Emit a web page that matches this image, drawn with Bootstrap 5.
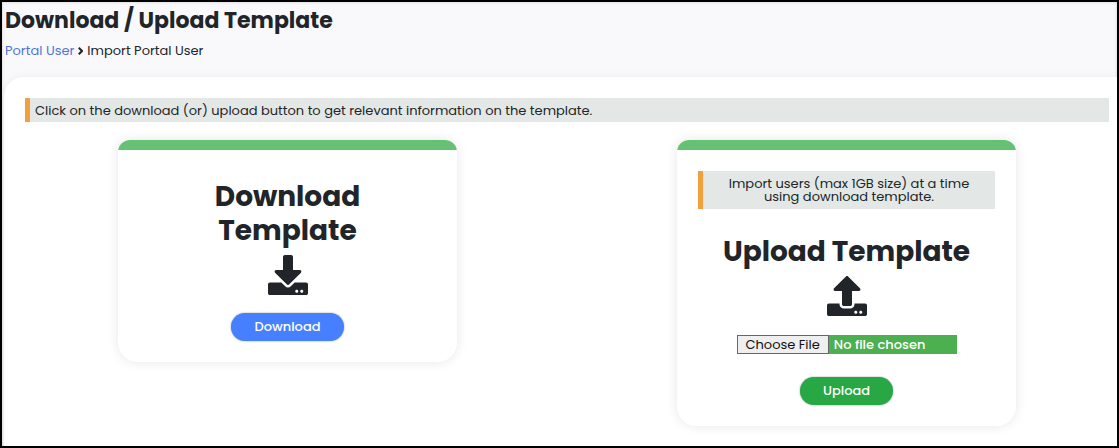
<!DOCTYPE html>
<html lang="en">
<head>
<meta charset="utf-8">
<meta name="viewport" content="width=device-width, initial-scale=1">
<title>Download / Upload Template</title>
<link href="https://cdn.jsdelivr.net/npm/bootstrap@5.3.0/dist/css/bootstrap.min.css" rel="stylesheet">
<style>
body{font-family:Poppins,Inter,sans-serif;font-size:13px;line-height:20px;color:#212529;background:#f9f9fb}
.app-frame{border:2px solid #000;box-shadow:inset 0 0 3px #ccc}
.page-title{font-size:22px;line-height:26px;font-weight:700;padding:6px 3px 0}
.crumbs{padding:0 3px;margin-top:7px}
.crumbs a{color:#4f74d9}
.panel{background:#fff;border-radius:20px 0 0 0;box-shadow:0 0 10px rgba(0,0,0,.06);margin:16px 0 0 2px;padding:21px 8px 16px 21px}
.note{background:#e3e8e6;border-left:5px solid #f2a03d;padding:3px 5px 1px}
.tiles{padding:0 93px;margin-top:18px}
.tile{width:339px;border:0;border-radius:12px 12px 20px 20px;background:linear-gradient(#66c272 10px,#fff 10px);box-shadow:0 0 12px rgba(0,0,0,.1);padding:31px 21px 21px}
.tile-narrow{padding-top:40px}
.tile .note{line-height:13px;padding:6px 20px;width:297px}
.tile h2{font-size:28px;line-height:34px;font-weight:700;margin:0}
.tile-narrow h2{width:180px}
.tile .note + h2{margin-top:26px}
.tile svg{width:40px;height:40px;margin-top:7px}
.pill{border-radius:20px;font-size:13px;line-height:20px;font-weight:500;padding:4px 23px;color:#fff;box-shadow:0 0 2px rgba(0,0,0,.4)}
.pill-blue{background:#467fff;margin-top:18px}
.pill-green{background:#28a745;margin-top:23px}
.picker{width:220px;height:19px;margin-top:19px;background:#4caf50;color:#fff;font-size:13px;font-weight:500;line-height:17px}
.picker::file-selector-button{height:19px;margin:0 5px 0 0;padding:0 8px;border:1px solid #666;border-radius:0;background:#efefef;color:#111;font:400 13px/17px Poppins,Inter,sans-serif}
</style>
</head>
<body>
<div class="app-frame min-vh-100 d-flex flex-column">
  <header>
    <h1 class="page-title m-0">Download / Upload Template</h1>
    <nav class="crumbs d-flex align-items-center" aria-label="Breadcrumb">
      <a class="text-decoration-none" href="#">Portal User</a>
      <svg class="mx-1" width="5" height="8" viewBox="0 0 5 8" fill="none" stroke="#212529" stroke-width="2" aria-hidden="true"><path d="M.8.8 4 4 .8 7.200"/></svg>
      <span>Import Portal User</span>
    </nav>
  </header>
  <main class="panel flex-grow-1">
    <div class="note">Click on the download (or) upload button to get relevant information on the template.</div>
    <div class="tiles d-flex flex-wrap justify-content-between align-items-start">
      <section class="tile tile-narrow card align-items-center text-center">
        <h2>Download Template</h2>
        <svg viewBox="0 0 512 512" fill="currentColor" aria-hidden="true"><path d="M216 0h80c13.300 0 24 10.700 24 24v168h87.700c17.800 0 26.700 21.500 14.100 34.100L269.700 378.300c-7.500 7.500-19.800 7.500-27.300 0L90.100 226.100c-12.600-12.600-3.700-34.100 14.100-34.100H192V24c0-13.300 10.700-24 24-24zm296 376v112c0 13.300-10.700 24-24 24H24c-13.300 0-24-10.700-24-24V376c0-13.300 10.700-24 24-24h146.700l49 49c20.100 20.100 52.500 20.100 72.600 0l49-49H488c13.300 0 24 10.700 24 24zm-124 88c0-11-9-20-20-20s-20 9-20 20 9 20 20 20 20-9 20-20zm64 0c0-11-9-20-20-20s-20 9-20 20 9 20 20 20 20-9 20-20z"/></svg>
        <button type="button" class="btn pill pill-blue border-0">Download</button>
      </section>
      <section class="tile card align-items-center text-center">
        <div class="note">Import users (max 1GB size) at a time using download template.</div>
        <h2 class="text-nowrap">Upload Template</h2>
        <svg viewBox="0 0 512 512" fill="currentColor" aria-hidden="true"><path d="M296 384h-80c-13.300 0-24-10.700-24-24V192h-87.700c-17.800 0-26.700-21.500-14.100-34.100L242.300 5.700c7.500-7.500 19.800-7.500 27.300 0l152.200 152.200c12.600 12.600 3.700 34.100-14.100 34.100H320v168c0 13.300-10.700 24-24 24zm216-8v112c0 13.300-10.700 24-24 24H24c-13.300 0-24-10.700-24-24V376c0-13.300 10.700-24 24-24h136v8c0 30.900 25.100 56 56 56h80c30.900 0 56-25.100 56-56v-8h136c13.300 0 24 10.700 24 24zm-124 88c0-11-9-20-20-20s-20 9-20 20 9 20 20 20 20-9 20-20zm64 0c0-11-9-20-20-20s-20 9-20 20 9 20 20 20 20-9 20-20z"/></svg>
        <input class="picker" type="file" aria-label="Template file">
        <button type="button" class="btn pill pill-green border-0">Upload</button>
      </section>
    </div>
  </main>
</div>
<script src="https://cdn.jsdelivr.net/npm/bootstrap@5.3.0/dist/js/bootstrap.bundle.min.js"></script>
</body>
</html>
